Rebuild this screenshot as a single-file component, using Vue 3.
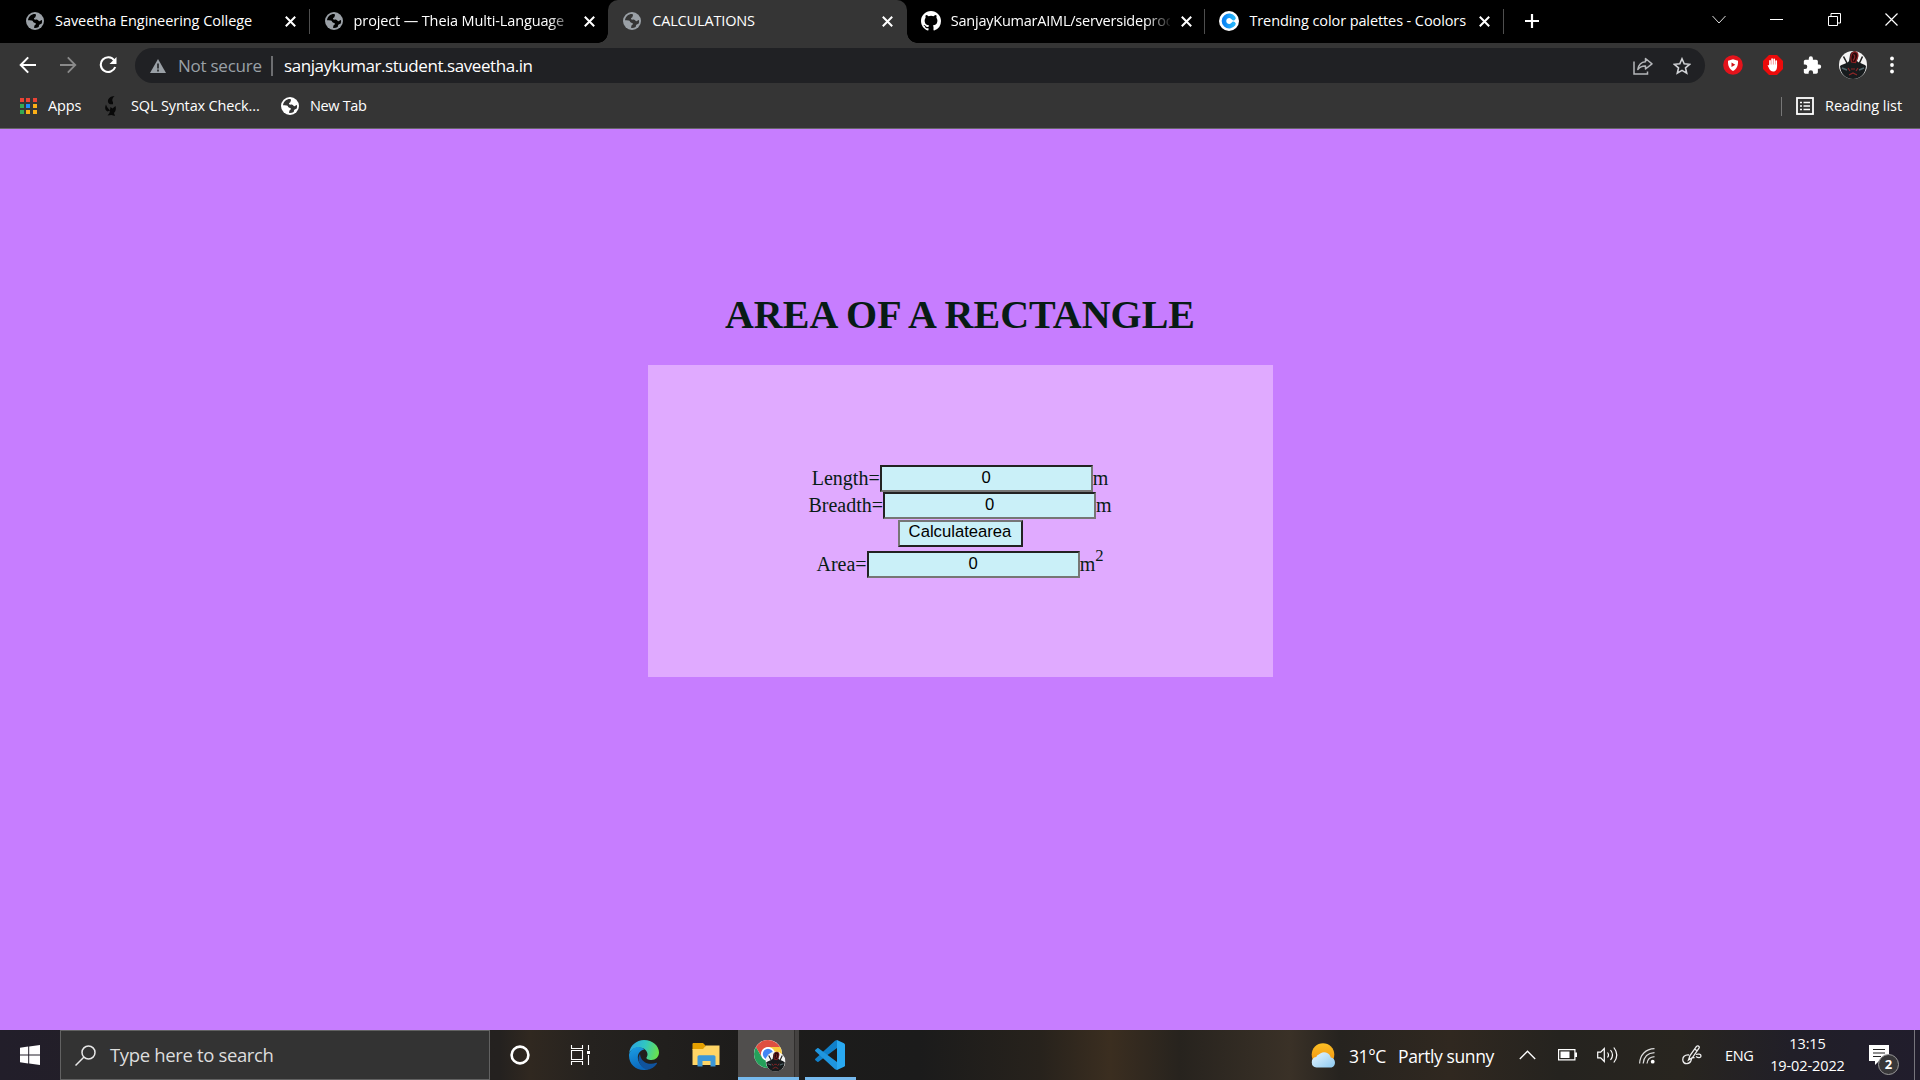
<script setup>
import { ref } from 'vue'

const tabs = [
  { title: 'Saveetha Engineering College', icon: 'globe', cls: 't1' },
  { title: 'project — Theia Multi-Language', icon: 'globe', cls: 't2' },
  { title: 'CALCULATIONS', icon: 'globe', active: true, cls: 't3' },
  { title: 'SanjayKumarAIML/serversideproc', icon: 'github', cls: 't4' },
  { title: 'Trending color palettes - Coolors', icon: 'coolors', cls: 't5' },
]
const appDots = ['#ea4335', '#ea4335', '#ea4335', '#34a853', '#1a8cff', '#fbaf17', '#34a853', '#fbaf17', '#fbaf17']

const length = ref('0')
const breadth = ref('0')
const area = ref('0')
function calculate() {
  area.value = String(Number(length.value) * Number(breadth.value))
}
</script>

<template>
  <div class="screen">
    <svg width="0" height="0" class="defs">
      <defs>
        <symbol id="globe" viewBox="0 0 18 18">
          <circle cx="9" cy="9" r="9" fill="currentColor" />
          <path class="land" d="M9.6 1.9C5.6 1.6 2.4 4.3 2 8.2c1 .1 2.900 0 4 .3 1.300.5.900 2 2.300 2.200 1.200.1 1.800.5 1.500 1.500-.3.900-1.300.8-1.500 1.700-.1.700 0 1.500-.2 2.100 1.500.2 3.300-.1 4.600-1 .3-1 .2-1.700 1-2.400.700-.500 1.700-.5 2.100-1.300.3-.8.4-2.300.1-3.300-1-.1-1.400 1.200-2.400 1.200-1.100 0-1.300-1.300-2.300-1.500-1.100-.3-2.400.3-3-.4-.600-.8.1-1.600.9-1.900.600-.3.400-1.200.9-1.900z" />
        </symbol>
        <symbol id="avatar" viewBox="0 0 28 28">
          <circle cx="14" cy="14" r="14" fill="#f4f4f4" />
          <path d="M4.500 5.500 9 14M23.500 5.500 19.500 14" stroke="#222" stroke-width="1.600" />
          <path d="M1 15c4-3 7-2 9-5l1-6c1-5 8-5 8 0l-1 6c3 3 6 2 9 5-.500 8-6 13-13 13S1.500 23 1 15z" fill="#171b1d" />
          <path d="M14 1.500c3-2 6 1 4.500 5l-2 5-4-.500c-1-4-1-8 1.500-9.500z" fill="#26090b" stroke="#8d2023" stroke-width="1.200" />
          <path d="M14.500 3.500c2 1 1.500 4-.500 6M9 17l2 3M19 17l-2 3M10 24l4-2 4 2M12 18h4" stroke="#8d2728" stroke-width="1.200" fill="none" />
          <path d="M3 17l5 2M25 17l-5 2" stroke="#50666b" stroke-width="1.500" />
        </symbol>
      </defs>
    </svg>

    <header class="chrome">
      <div class="tabstrip">
        <div v-for="t in tabs" :key="t.title" class="tab" :class="[{ active: t.active }, t.cls]">
          <svg v-if="t.icon === 'globe'" class="fav globe" width="18" height="18"><use href="#globe" /></svg>
          <svg v-else-if="t.icon === 'github'" class="fav" width="20" height="20" viewBox="0 0 16 16">
            <path fill="#fff" d="M8 0C3.580 0 0 3.580 0 8c0 3.540 2.290 6.530 5.470 7.590.400.070.550-.170.550-.380 0-.190-.010-.820-.010-1.490-2.010.370-2.530-.490-2.690-.940-.090-.230-.480-.940-.820-1.130-.280-.150-.680-.520-.010-.530.630-.010 1.080.580 1.230.820.720 1.210 1.870.870 2.330.660.070-.520.280-.870.510-1.070-1.780-.200-3.640-.890-3.640-3.950 0-.870.310-1.590.820-2.150-.080-.200-.360-1.020.080-2.120 0 0 .670-.210 2.200.820a7.600 7.600 0 0 1 4 0c1.530-1.040 2.200-.820 2.200-.820.440 1.100.160 1.920.080 2.120.510.560.820 1.270.820 2.150 0 3.070-1.870 3.750-3.650 3.950.290.250.540.730.540 1.480 0 1.070-.010 1.930-.010 2.200 0 .210.150.460.550.380A8.010 8.010 0 0 0 16 8c0-4.420-3.580-8-8-8z" />
          </svg>
          <svg v-else class="fav" width="20" height="20" viewBox="0 0 20 20">
            <defs><linearGradient id="cg"><stop offset="0" stop-color="#0a84f5" /><stop offset="1" stop-color="#28b4f8" /></linearGradient></defs>
            <circle cx="10" cy="10" r="10" fill="#fff" />
            <path d="M14.400 7A5.200 5.200 0 1 0 14.400 13" fill="none" stroke="url(#cg)" stroke-width="4.600" stroke-linecap="round" />
          </svg>
          <span class="title">{{ t.title }}</span>
          <svg class="close" width="11" height="11" viewBox="0 0 11 11"><path d="M.8.800l9.400 9.400M10.200.800.800 10.200" stroke="#fff" stroke-width="2" /></svg>
        </div>
        <svg class="plus" width="16" height="16" viewBox="0 0 16 16"><path d="M8 1v14M1 8h14" stroke="#fff" stroke-width="2.200" /></svg>
        <div class="wincontrols">
          <svg width="14" height="9" viewBox="0 0 14 9"><path d="M.500 1 7 8l6.500-7" fill="none" stroke="#ddd" /></svg>
          <svg width="13" height="13" viewBox="0 0 13 13"><path d="M0 6.500h13" stroke="#fff" /></svg>
          <svg width="13" height="13" viewBox="0 0 13 13"><path d="M.500 3.500h9v9h-9zM3 3V.500h9.500V10H10" fill="none" stroke="#fff" /></svg>
          <svg width="13" height="13" viewBox="0 0 13 13"><path d="M.500.500l12 12M12.500.500l-12 12" stroke="#fff" stroke-width="1.200" /></svg>
        </div>
      </div>

      <div class="toolbar">
        <svg class="nav" width="18" height="18" viewBox="0 0 18 18"><path d="M17 9H2M9.200 1.400 1.700 9l7.500 7.600" fill="none" stroke="#fff" stroke-width="2" /></svg>
        <svg class="nav" width="18" height="18" viewBox="0 0 18 18"><path d="M1 9h15M8.800 1.400 16.300 9l-7.500 7.600" fill="none" stroke="#8a8a8a" stroke-width="1.800" /></svg>
        <svg class="nav" width="18" height="18" viewBox="0 0 18 18"><path d="M15.300 4.400A7.400 7.400 0 1 0 16.200 11" fill="none" stroke="#fff" stroke-width="2.100" /><path d="M17.500 1v7H10.500z" fill="#fff" /></svg>
        <div class="omnibox">
          <svg width="16" height="14" viewBox="0 0 16 14"><path d="M8 0l8 14H0z" fill="#9aa0a6" /><path d="M8 4.500v5M8 10.500v2" stroke="#202124" stroke-width="1.600" /></svg>
          <span class="notsecure">Not secure</span>
          <i class="bar"></i>
          <span class="url">sanjaykumar.student.saveetha.in</span>
          <svg class="share" width="20" height="18" viewBox="0 0 20 18"><path d="M1 4.500v12.500h13.500v-2.500" fill="none" stroke="#b4b6b9" stroke-width="1.500" /><path d="M12.500 1.500 19 6.800l-6.500 5.200V9C9 8.800 6.800 10 4.800 12.500 5.500 8 8.500 5 12.500 4.700z" fill="none" stroke="#b4b6b9" stroke-width="1.500" stroke-linejoin="round" /></svg>
          <svg class="star" width="18" height="18" viewBox="0 0 18 18"><path d="M9 1.800l2.200 5 5.400.5-4.100 3.600 1.200 5.300L9 13.400l-4.700 2.800 1.200-5.300L1.400 7.300l5.400-.5z" fill="none" stroke="#d0d2d5" stroke-width="1.600" /></svg>
        </div>
        <div class="extensions">
          <svg width="20" height="20" viewBox="0 0 20 20"><circle cx="10" cy="10" r="9.800" fill="#e4131b" /><path d="M10 4.200l5 1.600c.2 5-1.300 8.200-5 10.200-3.700-2-5.200-5.200-5-10.200z" fill="#fff" /><path d="M8.500 7.500v4.600l3.800-2.300z" fill="#d01218" /></svg>
          <svg width="20" height="20" viewBox="0 0 20 20"><path d="M6 0h8l6 6v8l-6 6H6l-6-6V6z" fill="#ec0b0b" /><path d="M7 11V5.800M9.100 9.500V4M11.200 9.500V4.300M13.200 10V6" stroke="#fff" stroke-width="1.700" stroke-linecap="round" /><path d="M6.200 9.500h7.900c.2 4.500-1 7-3.800 7-2.200 0-3.600-1.300-4.800-4.200-.500-1.200-1-1.800-.8-2.200.4-.5 1.100-.1 1.500.6z" fill="#fff" /></svg>
          <svg width="19" height="20" viewBox="1 0 23 23"><path fill="#fff" d="M20.500 11H19V7c0-1.100-.900-2-2-2h-4V3.500a2.500 2.500 0 0 0-5 0V5H4a2 2 0 0 0-2 2v3.800h1.500a2.700 2.700 0 0 1 0 5.400H2V20c0 1.100.900 2 2 2h3.800v-1.500a2.700 2.700 0 0 1 5.400 0V22H17c1.100 0 2-.900 2-2v-4h1.500a2.500 2.500 0 0 0 0-5z" /></svg>
          <svg width="28" height="28"><use href="#avatar" /></svg>
          <svg width="4" height="18" viewBox="0 0 4 18"><circle cx="2" cy="2.500" r="1.900" fill="#fff" /><circle cx="2" cy="9" r="1.900" fill="#fff" /><circle cx="2" cy="15.500" r="1.900" fill="#fff" /></svg>
        </div>
      </div>

      <div class="bookmarks">
        <div class="dots"><i v-for="(c, n) in appDots" :key="n" :style="{ background: c }"></i></div>
        <span class="b1">Apps</span>
        <svg class="owl" width="12" height="20" viewBox="0 0 12 20"><path d="M9.500 0C5 .3 2.500 3 3 6c.4 2 2.500 2.700 5 2.200L8 6c-1.500-1.500-.500-4 1.500-6zM1 8.500c-1.500 3-1 6 1.500 7l2.500-1c-1.500-2-3-3-4-6zM5.500 11l2 1.500L10.500 10c.8 3 .2 5-1.500 7l1 3-3.500-1-4 .5 2-2.500z" fill="#080808" /></svg>
        <span class="b2">SQL Syntax Check...</span>
        <svg class="globe white" width="18" height="18"><use href="#globe" /></svg>
        <span class="b3">New Tab</span>
        <div class="reading">
          <svg width="18" height="18" viewBox="0 0 18 18"><rect x="1" y="1" width="16" height="16" fill="none" stroke="#fff" stroke-width="1.800" /><path d="M4 5.500h2M4 9h2M4 12.500h2M7.500 5.500H14M7.500 9H14M7.500 12.500H14" stroke="#fff" stroke-width="1.700" /></svg>
          <span>Reading list</span>
        </div>
      </div>
    </header>

    <main class="page">
      <h1>AREA OF A RECTANGLE</h1>
      <form class="box" @submit.prevent="calculate">
        <div class="row"><label>Length=</label><input v-model="length" type="text" /><label>m</label></div>
        <div class="row"><label>Breadth=</label><input v-model="breadth" type="text" /><label>m</label></div>
        <div class="row"><button type="submit">Calculatearea</button></div>
        <div class="row last"><label>Area=</label><input v-model="area" type="text" /><label>m</label><sup>2</sup></div>
      </form>
    </main>

    <footer class="taskbar">
      <div class="start"><svg width="20" height="20" viewBox="0 0 20 20"><path d="M0 2.800 8.200 1.600v7.900H0zM9.200 1.500 20 0v9.500H9.200zM0 10.500h8.200v7.900L0 17.200zM9.200 10.500H20V20L9.200 18.500z" fill="#fff" /></svg></div>
      <div class="search">
        <svg width="21" height="21" viewBox="0 0 21 21"><circle cx="13.500" cy="7.500" r="6.500" fill="none" stroke="#e8e8e8" stroke-width="1.500" /><path d="M9 12 .500 20.500" stroke="#e8e8e8" stroke-width="1.500" /></svg>
        <span>Type here to search</span>
      </div>
      <div class="apps">
        <div class="app"><svg width="20" height="20" viewBox="0 0 20 20"><circle cx="10" cy="10" r="8.400" fill="none" stroke="#fff" stroke-width="2.600" /></svg></div>
        <div class="app"><svg width="21" height="20" viewBox="0 0 21 20"><path d="M1.500 5.500h11v9h-11zM1.500 0v3.500h11V0M1.500 20v-3.500h11V20M18.500 0v5M18.500 10v10" fill="none" stroke="#fff" stroke-width="1.100" /><path d="M17 6h3v3h-3z" fill="#fff" /></svg></div>
        <div class="app">
          <svg width="30" height="30" viewBox="0 0 30 30">
            <defs>
              <linearGradient id="e1" x1="0" y1=".3" x2="1" y2=".5"><stop offset="0" stop-color="#2ba3e5" /><stop offset=".5" stop-color="#31c6c1" /><stop offset="1" stop-color="#69e04c" /></linearGradient>
              <linearGradient id="e2" x1="0" y1="0" x2=".3" y2="1"><stop offset="0" stop-color="#1ba0e5" /><stop offset="1" stop-color="#0b68bd" /></linearGradient>
            </defs>
            <path d="M.200 13C1 5.500 7.500 0 15 0c8.500 0 15 5.800 15 12.500 0 4.500-3.500 7.500-7.500 7.500-3.500 0-5.500-1.300-5-2.500 1.500-2 1.500-5-1-7.500C12 6 4 7 .2 13z" fill="url(#e1)" />
            <path d="M.100 14C2.500 6.500 11.500 5 15.500 9.500c-4 .5-7.500 4.500-6.500 9.500.8 5 5 9 10.500 10.500C9 32-1 25 .1 14z" fill="url(#e2)" />
            <path d="M11 14c-3 4-1.500 12 6 15.500 4 .5 8.500-2 11-6 .3-.8-.2-1-.8-.7-7 3-15.500-.500-16.200-8.800z" fill="#10539d" />
          </svg>
        </div>
        <div class="app">
          <svg width="28" height="24" viewBox="0 0 28 24"><path d="M.5 1.200C.500.500 1 0 1.700 0H11l2.500 2.500V7H.500z" fill="#e5a000" /><path d="M.500 6H11l3-3.500h13.500V22H.500z" fill="#ffd566" /><path d="M5.500 23.500V14c0-1 .6-1.700 1.700-1.700h14.600c1.100 0 1.700.7 1.700 1.700v9.500h-5V18h-8v5.500z" fill="#3c97d8" /></svg>
        </div>
        <div class="app chromeapp">
          <svg width="32" height="32" viewBox="0 0 32 32">
            <circle cx="14" cy="14" r="14" fill="#fff" />
            <path d="M1.880 7A14 14 0 0 1 26.100 7H14a7 7 0 0 0-6.060 10.500z" fill="#df4f41" />
            <path d="M1.880 7A14 14 0 0 0 14 28l6.060-10.500A7 7 0 0 1 7.940 17.500z" fill="#24a05a" />
            <path d="M26.100 7A14 14 0 0 1 14 28l6.060-10.500A7 7 0 0 0 14 7z" fill="#fbcb3d" />
            <circle cx="14" cy="14" r="6.500" fill="#fff" /><circle cx="14" cy="14" r="5.200" fill="#4285f4" />
            <use href="#avatar" x="11.500" y="11.500" width="20" height="20" />
          </svg>
        </div>
        <div class="app code">
          <svg width="30" height="30" viewBox="0 0 30 30"><path d="M22 0l7 3.200c.6.300 1 .9 1 1.600v20.400c0 .7-.4 1.300-1 1.600L22 30z" fill="#29a9f2" /><path d="M22 0v8L3.500 21.800c-.4.300-.9.300-1.200 0L.4 20.200c-.5-.4-.5-1 0-1.500L20 .7z" fill="#1080ca" /><path d="M22 30v-8L3.500 8.200c-.4-.3-.9-.3-1.200 0L.4 9.800c-.5.400-.5 1 0 1.500L20 29.300z" fill="#1f96df" /></svg>
        </div>
      </div>
      <div class="tray">
        <svg class="weather" width="26" height="25" viewBox="0 0 26 25">
          <defs><linearGradient id="sun" x1="0" y1="0" x2="0" y2="1"><stop offset="0" stop-color="#fbbf24" /><stop offset="1" stop-color="#f28c0d" /></linearGradient><linearGradient id="cl" x1="0" y1="0" x2="1" y2="1"><stop offset="0" stop-color="#e9f6ff" /><stop offset="1" stop-color="#8cc9f0" /></linearGradient></defs>
          <circle cx="12" cy="11.500" r="11.300" fill="url(#sun)" />
          <path d="M5.500 24.500a5.300 5.300 0 0 1-.3-10.500 4.500 4.500 0 0 1 3-2.800 7 7 0 0 1 11.600 3.300 5.200 5.200 0 0 1 .700 10z" fill="url(#cl)" />
        </svg>
        <span class="temp">31°C</span><span class="cond">Partly sunny</span>
        <svg class="up" width="17" height="10" viewBox="0 0 17 10"><path d="M.800 9 8.500 1.200 16.200 9" fill="none" stroke="#fff" stroke-width="1.300" /></svg>
        <svg class="bat" width="19" height="12" viewBox="0 0 19 12"><path d="M.600.600h16.300v10.300H.600z" fill="none" stroke="#fff" stroke-width="1.200" /><path d="M2.500 2.500h9V9h-9zM17 3.500h2v4.500h-2z" fill="#fff" /></svg>
        <svg class="vol" width="21" height="18" viewBox="0 0 21 18"><path d="M.700 6.200h3L7.300 2.500v13L3.700 11.800h-3zM10.500 6.500q2 2.500 0 5M13.500 4q4 5 0 10M16.800 1.500q6 7.500 0 15" fill="none" stroke="#fff" stroke-width="1.200" /></svg>
        <svg class="wifi" width="16" height="16" viewBox="0 0 16 16"><g fill="none" stroke="#ddd" stroke-width="1.200"><path d="M.600 15.500C1 7 6.500 1 15.500.700M4.200 15.500C4.800 9 9 5 15.500 4.700M8 15.500c.4-4 3.500-6.500 7.500-6.800" /></g><circle cx="13.700" cy="13.700" r="1.900" fill="#fff" /></svg>
        <svg class="pen" width="20" height="20" viewBox="0 0 20 20"><path d="M6.500 15 8 10.500 14.500 1.500c1-1.500 3.500 0 2.500 1.700L10.500 12.500zM12.500 4l3 2M7 10c-4-.5-7 2-6 6 1 4 7 3 8-.5.7-3 2-3.500 3.500-2.500M14 9.500c2-.8 5-.5 5 1.500s-3 2-5 .5" fill="none" stroke="#eee" stroke-width="1.300" /></svg>
        <span class="lang">ENG</span>
        <div class="clock"><span class="time">13:15</span><span class="date">19-02-2022</span></div>
        <div class="notif">
          <svg width="20" height="20" viewBox="0 0 20 20"><path d="M0 0h20v16H10l-4 4v-4H0z" fill="#fff" /><path d="M4 4.500h12M4 8h12M4 11.500h8" stroke="#222" stroke-width="1.200" /></svg>
          <b>2</b>
        </div>
        <i class="peek"></i>
      </div>
    </footer>
  </div>
</template>

<style>
body { margin: 0; overflow: hidden; }
</style>

<style scoped>
* { box-sizing: border-box; }
.screen { width: 1920px; height: 1080px; display: flex; flex-direction: column; overflow: hidden; font-family: "Open Sans", "Noto Sans", sans-serif; color: #fff; }
.defs { position: absolute; }
svg { display: block; flex: none; }
span { white-space: nowrap; }

.chrome { height: 129px; background: #353535; border-bottom: 1px solid #67666a; display: flex; flex-direction: column; font-size: 14.5px; letter-spacing: -.35px; }
.tabstrip { height: 43px; background: #000; padding-left: 11px; display: flex; flex: none; }
.tab { width: 298.6px; flex: none; position: relative; display: flex; align-items: center; padding-left: 15px; padding-bottom: 1px; }
.tab::after { content: ""; position: absolute; right: 0; top: 9px; width: 1px; height: 25px; background: #4e4e4e; }
.tab.t2::after, .tab.t3::after { display: none; }
.fav { margin-right: 11px; }
.t4 .fav, .t5 .fav { margin-left: -1px; margin-right: 10px; }
.globe { color: #9aa0a6; --land: #000; }
.active .globe, .globe.white { --land: #353535; }
.globe.white { color: #fff; }
.land { fill: var(--land); }
.title { width: 219px; padding-bottom: 2px; }
.t1 .title { letter-spacing: -.05px; }
.t2 .title { letter-spacing: -.13px; }
.t3 .title { letter-spacing: -.15px; }
.t4 .title { letter-spacing: -.23px; }
.t5 .title { letter-spacing: -.1px; }
.t2 .title, .t4 .title { -webkit-mask-image: linear-gradient(90deg, #000 195px, transparent 222px); mask-image: linear-gradient(90deg, #000 195px, transparent 222px); }
.close { margin-left: 11px; }
.active { background: #353535; border-radius: 10px 10px 0 0; }
.active::before { content: ""; position: absolute; z-index: 1; bottom: 0; left: -10px; right: -10px; height: 10px; background: radial-gradient(circle at 0 0, transparent 9.500px, #353535 10px) 0 0 / 10px 10px no-repeat, radial-gradient(circle at 100% 0, transparent 9.500px, #353535 10px) 100% 0 / 10px 10px no-repeat; }
.plus { margin: 13px 0 0 20px; }
.wincontrols { margin-left: auto; padding: 0 22px 5px 0; display: flex; align-items: center; gap: 44.500px; }

.toolbar { height: 44px; flex: none; display: flex; align-items: center; padding: 0 26px 0 18.500px; }
.nav { margin-right: 22px; }
.nav:nth-child(3) { margin-right: 18.500px; }
.omnibox { width: 1570px; height: 35px; margin-top: 1px; border-radius: 18px; background: #202124; display: flex; align-items: center; padding: 0 14px 0 15px; font-size: 17px; }
.omnibox span { padding-bottom: 1px; }
.notsecure { margin-left: 12px; width: 93px; color: #9aa0a6; letter-spacing: -.25px; }
.bar { width: 2px; height: 20px; background: #6d6e71; margin-right: 11px; }
.url { letter-spacing: -.43px; }
.share { margin-left: auto; }
.star { margin-left: 20px; }
.extensions { margin-left: auto; display: flex; align-items: center; flex: none; gap: 20px; }
.extensions svg:nth-child(4) { margin-left: -3px; }
.extensions svg:nth-child(5) { margin-left: 3px; }

.bookmarks { height: 38px; flex: none; display: flex; align-items: center; padding: 0 18px 0 20px; }
.bookmarks span { padding-bottom: 2px; }
.dots { width: 17px; display: grid; grid-template-columns: repeat(3, 4px); gap: 2.300px; }
.dots i { height: 4px; }
.b1 { margin-left: 11px; width: 57px; letter-spacing: -.1px; }
.b2 { margin-left: 14px; width: 150px; letter-spacing: -.15px; }
.b3 { margin-left: 11px; }
.reading { margin-left: auto; height: 19px; border-left: 1px solid #777; padding-left: 14px; display: flex; align-items: center; }
.reading span { width: 77px; margin-left: 11px; letter-spacing: -.05px; }

.page { height: 901px; background: #c77dff; display: flex; flex-direction: column; align-items: center; font-family: "Liberation Serif", serif; color: #081c15; }
h1 { margin: 163px 0 27px; font-size: 40px; line-height: 46px; font-weight: bold; white-space: nowrap; }
.box { width: 625px; height: 312px; background: #e0aaff; padding-top: 100px; font-size: 20px; display: flex; flex-direction: column; align-items: center; }
.row { height: 27.300px; display: flex; align-items: center; line-height: 24px; flex: none; }
.row label { padding-bottom: 2px; }
.row.last { margin-top: 4px; }
input, button { border-radius: 0; margin: 0; height: 27px; font: 16.667px "Liberation Sans", sans-serif; background: #caf0f8; color: #000; text-align: center; outline: 0; }
input { width: 213px; padding: 0 2px 1px; border: 2px solid; border-color: #222 #767676 #767676 #222; }
button { width: 125px; padding: 0 0 2px; border: 2px solid; border-color: #767676 #222 #222 #767676; line-height: 20px; }
sup { font-size: 16.667px; line-height: 1; align-self: flex-start; margin-top: -3px; }

.taskbar { height: 50px; display: flex; background: linear-gradient(90deg, #221e2a 0, #24211f 500px, #302820 530px, #25221f 590px, #1d1c1b 740px, #1b1b1b 920px, #27221c 1040px, #3b2e20 1110px, #27231e 1180px, #3a3127 1290px, #26231f 1340px, #302820 1450px, #25231f 1560px, #28251f 1680px, #211f28 1790px, #211d2c 100%); }
.start { width: 60px; display: flex; align-items: center; justify-content: center; }
.search { width: 430px; height: 50px; background: #333; border: 1px solid #626262; display: flex; align-items: center; padding-left: 14px; }
.search span { margin-left: 14px; font-size: 18.500px; color: #ddd; letter-spacing: -.35px; padding-bottom: 1px; }
.apps { display: flex; }
.app { width: 62px; display: flex; align-items: center; justify-content: center; }
.app:nth-child(1), .app:nth-child(2) { width: 60px; }
.app:nth-child(3) { margin-left: 3px; }
.app:nth-child(4) { width: 61px; margin-right: 2px; }
.chromeapp { width: 61px; padding-left: 2px; background: linear-gradient(90deg, #504e4d 56px, #302e2d 56px, #302e2d 57px, #444241 57px); border-bottom: 3px solid #76b9ed; padding-top: 4px; }
.code { width: 51px; margin-left: 6px; border-bottom: 3px solid #76b9ed; padding-top: 3px; padding-right: 2px; }
.tray { margin-left: auto; display: flex; align-items: center; }
.temp, .cond { font-size: 17.500px; letter-spacing: -.4px; margin-top: 2px; }
.temp { margin-left: 12px; width: 49px; }
.cond { width: 95px; }
.up { margin-left: 26px; }
.bat { margin-left: 22px; }
.vol { margin-left: 20px; }
.wifi { margin-left: 21px; margin-top: 2px; }
.pen { margin-left: 27px; }
.lang { margin-left: 23px; width: 30px; font-size: 14.500px; letter-spacing: -.4px; margin-top: 1px; }
.clock { margin-left: 14px; width: 77px; display: flex; flex-direction: column; align-items: center; font-size: 14.500px; line-height: 22.500px; letter-spacing: -.1px; }
.notif { margin-left: 23px; width: 20px; height: 20px; position: relative; }
.notif b { position: absolute; left: 9px; top: 9px; width: 21px; height: 21px; border-radius: 50%; border: 1px solid #999; background: #383739; font-size: 13px; line-height: 19px; text-align: center; }
.peek { margin-left: 25px; width: 1px; height: 50px; background: #77757c; margin-right: 5px; }
</style>
